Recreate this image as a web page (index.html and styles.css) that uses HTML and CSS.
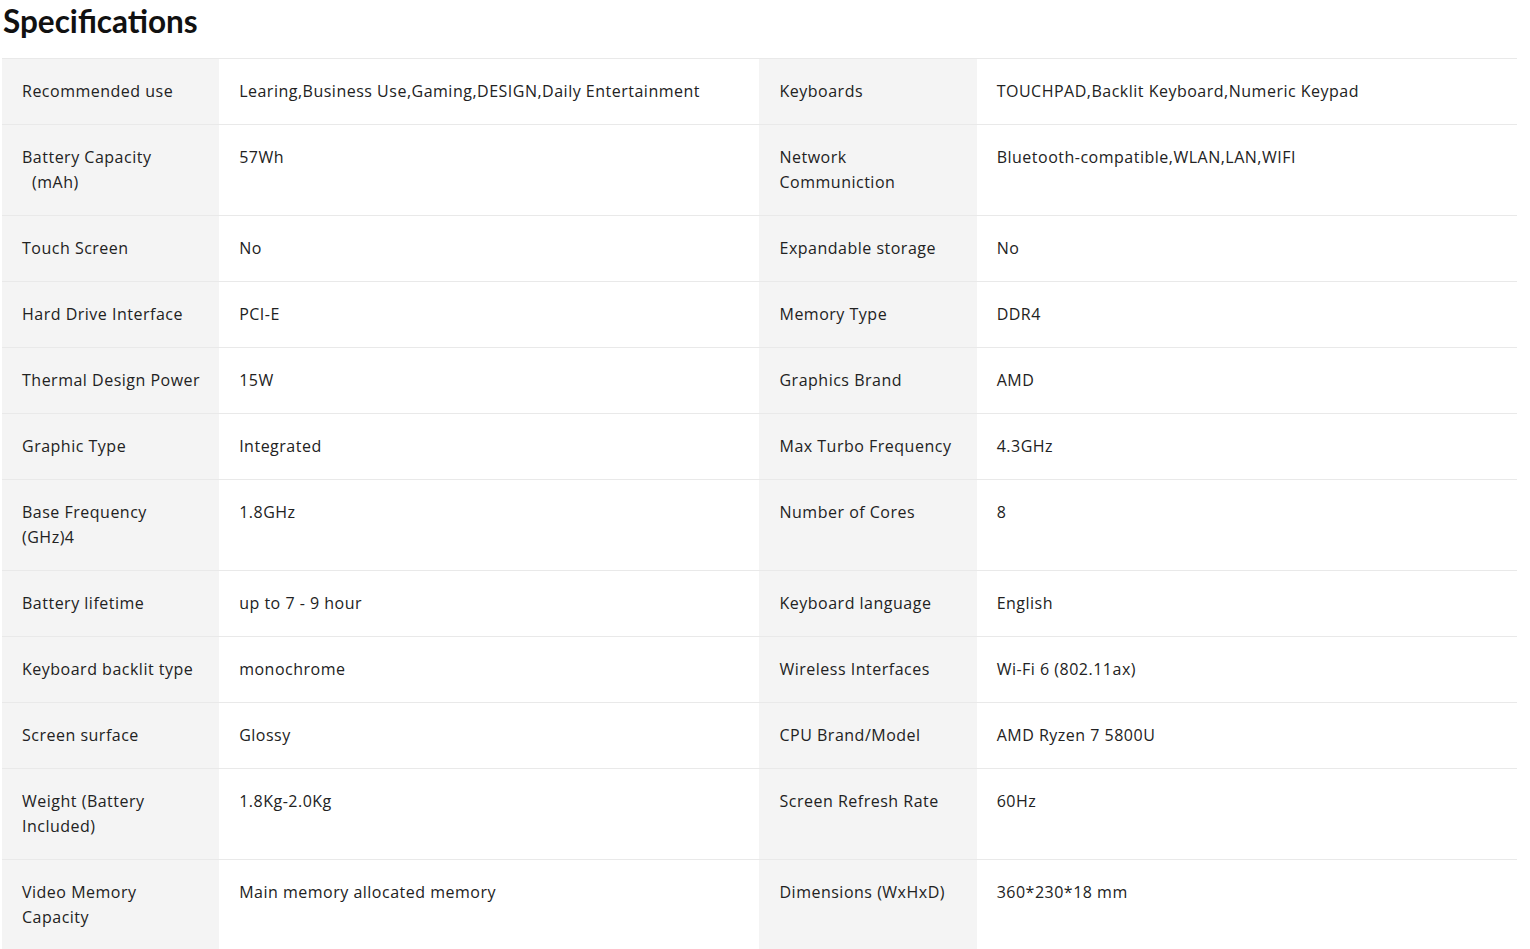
FILE: index.html
```html
<!DOCTYPE html>
<html lang="en">
<head>
<meta charset="utf-8">
<title>Specifications</title>
<link rel="stylesheet" href="styles.css">
</head>
<body>
<section class="specs">
  <h2 class="specs-title">Specifications</h2>
  <table class="spec-table">
    <colgroup>
      <col class="c-label"><col class="c-value"><col class="c-label"><col class="c-value">
    </colgroup>
    <tbody>
      <tr><th>Recommended use</th><td>Learing,Business Use,Gaming,DESIGN,Daily Entertainment</td><th>Keyboards</th><td>TOUCHPAD,Backlit Keyboard,Numeric Keypad</td></tr>
      <tr><th>Battery Capacity<br><span class="indent">(mAh)</span></th><td>57Wh</td><th>Network Communiction</th><td>Bluetooth-compatible,WLAN,LAN,WIFI</td></tr>
      <tr><th>Touch Screen</th><td>No</td><th>Expandable storage</th><td>No</td></tr>
      <tr><th>Hard Drive Interface</th><td>PCI-E</td><th>Memory Type</th><td>DDR4</td></tr>
      <tr><th>Thermal Design Power</th><td>15W</td><th>Graphics Brand</th><td>AMD</td></tr>
      <tr><th>Graphic Type</th><td>Integrated</td><th>Max Turbo Frequency</th><td>4.3GHz</td></tr>
      <tr><th>Base Frequency (GHz)4</th><td>1.8GHz</td><th>Number of Cores</th><td>8</td></tr>
      <tr><th>Battery lifetime</th><td>up to 7 - 9 hour</td><th>Keyboard language</th><td>English</td></tr>
      <tr><th>Keyboard backlit type</th><td>monochrome</td><th>Wireless Interfaces</th><td>Wi-Fi 6 (802.11ax)</td></tr>
      <tr><th>Screen surface</th><td>Glossy</td><th>CPU Brand/Model</th><td>AMD Ryzen 7 5800U</td></tr>
      <tr><th>Weight (Battery Included)</th><td>1.8Kg-2.0Kg</td><th>Screen Refresh Rate</th><td>60Hz</td></tr>
      <tr><th>Video Memory Capacity</th><td>Main memory allocated memory</td><th>Dimensions (WxHxD)</th><td>360*230*18 mm</td></tr>
    </tbody>
  </table>
</section>
</body>
</html>
```
FILE: styles.css
```css
html, body {
  margin: 0;
  padding: 0;
  background: #fff;
}
body {
  font-family: "Open Sans", Lato, sans-serif;
  color: #222;
}
.specs {
  padding: 0 13px 0 2px;
}
.specs-title {
  margin: 0;
  padding: 2px 0 0 1px;
  height: 58px;
  box-sizing: border-box;
  font-family: Lato, sans-serif;
  font-size: 31.5px;
  font-weight: 700;
  line-height: 38px;
  color: #111;
}
.spec-table {
  width: 1515px;
  border-collapse: collapse;
  table-layout: fixed;
  border-top: 1px solid #e9e9e9;
}
.c-label { width: 217px; }
.c-value { width: 540px; }
.spec-table th,
.spec-table td {
  text-align: left;
  vertical-align: top;
  font-weight: 400;
  font-size: 16px;
  letter-spacing: 0.5px;
  line-height: 25px;
  padding: 20px 20px;
  border-bottom: 1px solid #e9e9e9;
  color: #222;
}
.spec-table th {
  padding-right: 18px;
  background: #f4f4f4;
}
.spec-table td {
  background: #fff;
}
.indent {
  padding-left: 10px;
}
```
